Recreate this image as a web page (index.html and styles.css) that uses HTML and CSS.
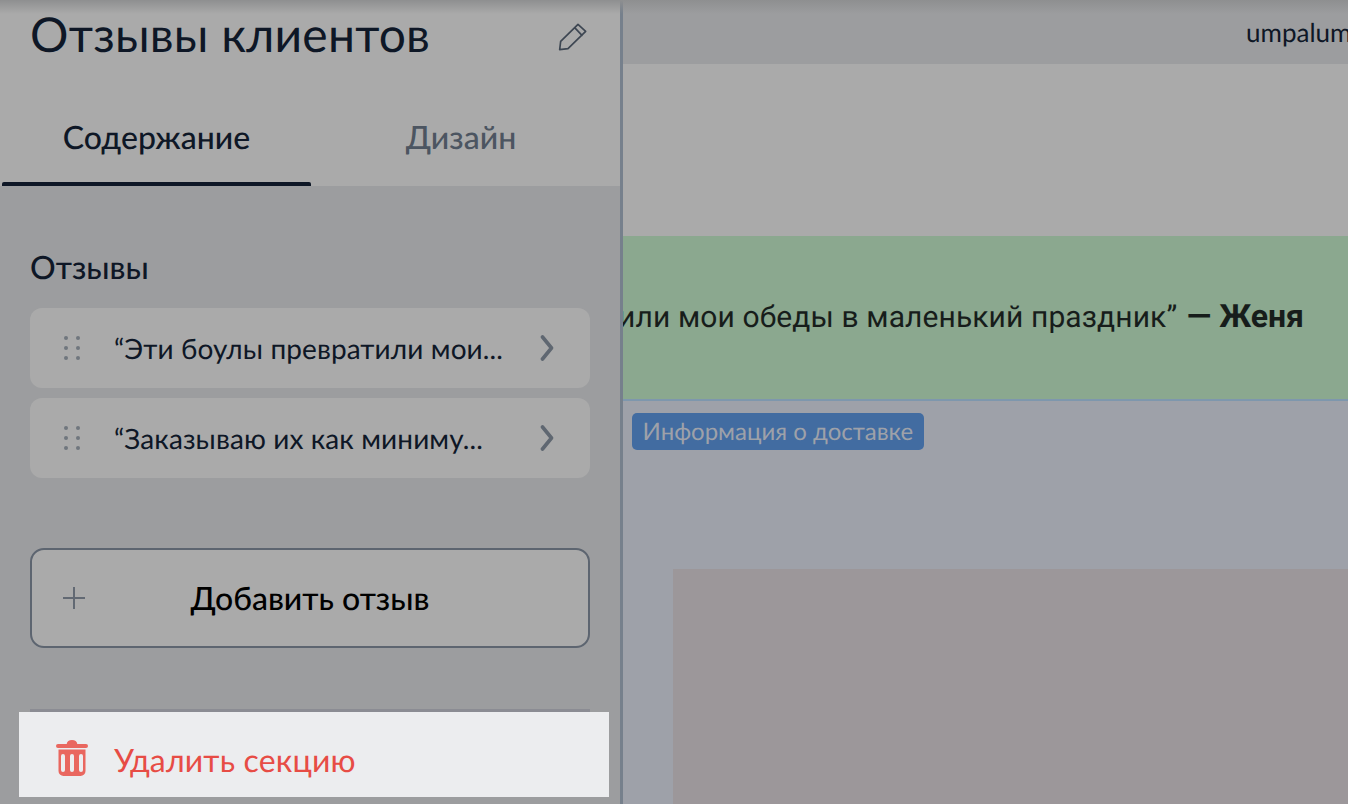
FILE: index.html
```html
<!DOCTYPE html>
<html lang="ru">
<head>
<meta charset="utf-8">
<title>Отзывы клиентов</title>
<link rel="stylesheet" href="styles.css">
</head>
<body>
<div class="app">
  <aside class="side">
    <div class="side-head">
      <div class="title-row">
        <h1 class="title">Отзывы клиентов</h1>
        <svg class="pencil" viewBox="25 20 90 90" width="30" height="30"><path d="M33 78 85 27 108 48 55 100 30 103ZM75 37 97 60" fill="none" stroke="#3d4652" stroke-width="5" stroke-linejoin="round" stroke-linecap="round"/></svg>
      </div>
      <div class="tabs">
        <div class="tab tab-active">Содержание</div>
        <div class="tab tab-muted">Дизайн</div>
      </div>
    </div>
    <div class="side-body">
      <h2 class="label">Отзывы</h2>
      <div class="item">
        <svg class="grip" viewBox="0 0 18 26" width="18" height="26"><g fill="#70767e"><circle cx="3" cy="3" r="2"/><circle cx="15" cy="3" r="2"/><circle cx="3" cy="13" r="2"/><circle cx="15" cy="13" r="2"/><circle cx="3" cy="23" r="2"/><circle cx="15" cy="23" r="2"/></g></svg>
        <span class="item-text">“Эти боулы превратили мои...</span>
        <svg class="chev" viewBox="0 0 14 28" width="14" height="28"><path d="M2.500 3 11.500 14 2.500 25" fill="none" stroke="#5f6771" stroke-width="3.600" stroke-linecap="round" stroke-linejoin="round"/></svg>
      </div>
      <div class="item">
        <svg class="grip" viewBox="0 0 18 26" width="18" height="26"><g fill="#70767e"><circle cx="3" cy="3" r="2"/><circle cx="15" cy="3" r="2"/><circle cx="3" cy="13" r="2"/><circle cx="15" cy="13" r="2"/><circle cx="3" cy="23" r="2"/><circle cx="15" cy="23" r="2"/></g></svg>
        <span class="item-text">“Заказываю их как миниму...</span>
        <svg class="chev" viewBox="0 0 14 28" width="14" height="28"><path d="M2.500 3 11.500 14 2.500 25" fill="none" stroke="#5f6771" stroke-width="3.600" stroke-linecap="round" stroke-linejoin="round"/></svg>
      </div>
      <div class="add">
        <svg class="plus" viewBox="0 0 26 26" width="26" height="26"><path d="M13 2V24M2 13H24" stroke="#626973" stroke-width="2" fill="none"/></svg>
        <span class="add-text">Добавить отзыв</span>
      </div>
      <div class="rule"></div>
      <div class="delete">
        <svg class="trash" viewBox="0 0 32 36" width="32" height="36"><path fill="#e9675f" fill-rule="evenodd" d="M10.700 4C11 1.500 13 0 16 0S21 1.500 21.300 4H30a2 2 0 0 1 0 4H2a2 2 0 0 1 0-4ZM2.500 9.500H29.500V31a5 5 0 0 1-5 5H7.500a5 5 0 0 1-5-5ZM7 14a2 2 0 0 0-2 2V30a2 2 0 0 0 4 0V16a2 2 0 0 0-2-2ZM16 14a2 2 0 0 0-2 2V30a2 2 0 0 0 4 0V16a2 2 0 0 0-2-2ZM25 14a2 2 0 0 0-2 2V30a2 2 0 0 0 4 0V16a2 2 0 0 0-2-2Z"/></svg>
        <span class="delete-text">Удалить секцию</span>
      </div>
    </div>
  </aside>
  <main class="main">
    <div class="topbar"><span class="user">umpalumpa</span></div>
    <div class="hero"></div>
    <div class="banner"><p class="quote">“Эти боулы превратили мои обеды в маленький праздник” <b class="author">— Женя</b></p></div>
    <section class="delivery">
      <span class="badge">Информация о доставке</span>
      <div class="photo"></div>
    </section>
  </main>
</div>
<div class="shade"></div>
</body>
</html>
```
FILE: styles.css
```css
* { box-sizing: border-box; }
html, body { margin: 0; height: 100%; overflow: hidden; }
body { font-family: Lato, Carlito, "Open Sans", sans-serif; background: #9c9d9f; color: #0e1726; text-rendering: geometricPrecision; }
.app { display: flex; width: 1348px; height: 804px; }
.side { width: 620px; flex: none; display: flex; flex-direction: column; background: #9c9d9f; }
.side-head { height: 186px; background: #aaaaaa; display: flex; flex-direction: column; }
.title-row { height: 72px; padding: 0 32px 0 30px; display: flex; align-items: center; justify-content: space-between; }
.title { margin: 0 0 2px; font-size: 48px; font-weight: 400; line-height: 70px; letter-spacing: .22px; }
.pencil { flex: none; margin-top: 2px; }
.tabs { display: flex; flex: 1; padding-left: 2px; }
.tab { display: flex; align-items: center; justify-content: center; height: 114px; font-size: 32px; font-weight: 500; padding-top: 14px; }
.tab-active { width: 309px; position: relative; }
.tab-active::after { content: ""; position: absolute; left: 0; right: 0; bottom: 0; height: 4px; background: #0e1726; border-radius: 2px 2px 0 0; }
.tab-muted { width: 300px; color: #4c5561; }
.side-body { flex: 1; display: flex; flex-direction: column; padding: 0 30px; }
.label { margin: 63px 0 0; font-size: 32px; font-weight: 500; line-height: 36px; height: 59px; }
.item { display: flex; align-items: center; height: 80px; margin-bottom: 10px; padding: 0 36px 0 33px; background: #aaaaaa; border-radius: 12px; }
.grip { flex: none; margin-right: 33px; }
.item-text { flex: 1; font-size: 28px; white-space: nowrap; letter-spacing: .1px; }
.chev { flex: none; }
.add { position: relative; display: flex; align-items: center; justify-content: center; height: 100px; margin-top: 60px; padding-bottom: 2px; border: 2px solid #5d6570; border-radius: 14px; background: #aaaaaa; }
.plus { position: absolute; left: 29px; top: 35px; }
.add-text { font-size: 32px; font-weight: 500; color: #000; }
.rule { height: 3px; margin-top: 61px; background: #8b8c93; }
.delete { display: flex; align-items: center; height: 85px; margin: 0 -19px 0 -11px; padding: 10px 0 0 37px; background: #ecedef; }
.trash { flex: none; margin-right: 26px; margin-top: -3px; }
.delete-text { font-size: 32px; color: #e74c45; letter-spacing: .15px; }
.main { flex: 1; min-width: 0; display: flex; flex-direction: column; border-left: 3px solid #76808c; }
.topbar { height: 64px; background: #9c9d9f; display: flex; align-items: center; padding-left: 623px; white-space: nowrap; overflow: hidden; }
.user { font-size: 26px; }
.hero { height: 172px; background: #aaaaaa; }
.banner { height: 165px; background: #8ba88f; border-bottom: 2px solid #7e97ad; display: flex; justify-content: flex-end; padding: 61px 44px 0 0; overflow: hidden; }
.quote { margin: 0; flex: none; font-family: Roboto, sans-serif; font-size: 30px; line-height: 38px; letter-spacing: .1px; white-space: nowrap; color: #171d1b; }
.author { margin-left: 2px; font-size: 32px; font-weight: 700; letter-spacing: 0; }
.delivery { flex: 1; background: #9ea1a9; padding: 12px 0 0 9px; overflow: hidden; }
.badge { display: inline-block; height: 37px; padding: 0 10.500px; background: #426ca1; border-radius: 5px; font-size: 24px; line-height: 38px; color: #9ea1a9; }
.photo { height: 300px; margin: 119px 0 0 41px; background: #9c979a; }
.shade { position: absolute; left: 0; top: 0; width: 100%; height: 14px; background: linear-gradient(#8e8f90, rgba(142,143,144,0)); pointer-events: none; }
```
